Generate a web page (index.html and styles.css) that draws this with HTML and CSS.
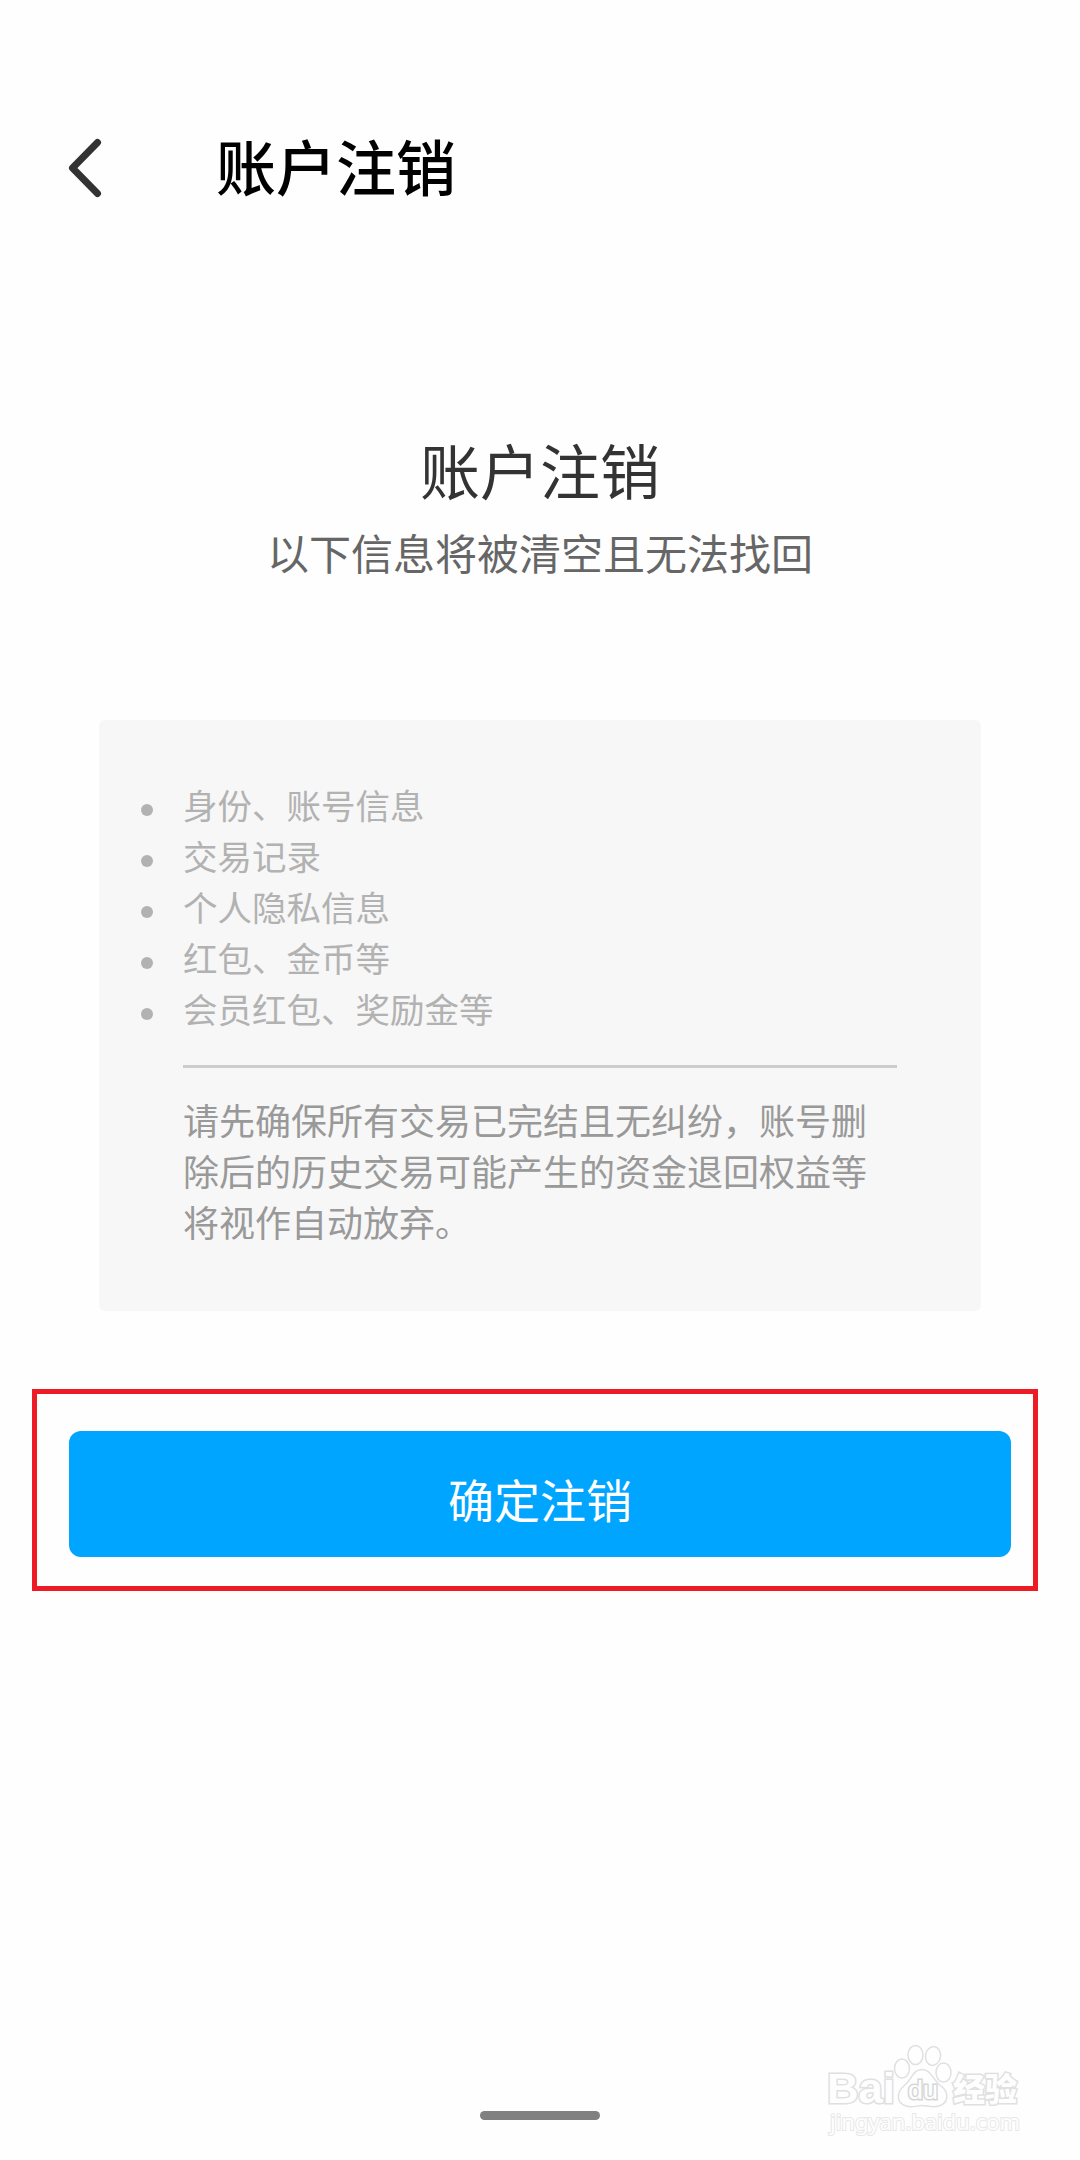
FILE: index.html
```html
<!DOCTYPE html>
<html lang="zh-CN">
<head>
    <meta charset="UTF-8">
    <meta name="viewport" content="width=device-width, initial-scale=1.0">
    <title>账户注销</title>
    <link rel="stylesheet" href="styles.css">
</head>
<body>
    <div class="page">
        <header class="header">
            <svg class="back" viewBox="0 0 34 60" width="34" height="60">
                <path d="M29.5 4.5L4.5 30L29.5 55.5"/>
            </svg>
            <h1>账户注销</h1>
        </header>
        <div class="intro">
            <h2>账户注销</h2>
            <p>以下信息将被清空且无法找回</p>
        </div>
        <div class="card">
            <ul class="items">
                <li>身份、账号信息</li>
                <li>交易记录</li>
                <li>个人隐私信息</li>
                <li>红包、金币等</li>
                <li>会员红包、奖励金等</li>
            </ul>
            <p class="notice">请先确保所有交易已完结且无纠纷，账号删除后的历史交易可能产生的资金退回权益等将视作自动放弃。</p>
        </div>
        <div class="highlight">
            <button type="button" class="btn">确定注销</button>
        </div>
        <div class="home-bar"></div>
        <svg class="watermark" viewBox="0 0 200 100" width="200" height="100">
            <text class="wm-bai" x="6" y="43" textLength="68" lengthAdjust="spacingAndGlyphs">Bai</text>
            <ellipse cx="81" cy="8.500" rx="7.500" ry="9.500"/>
            <ellipse cx="94.500" cy="-5" rx="7.500" ry="9.500"/>
            <ellipse cx="112" cy="-4" rx="7.500" ry="9.500" transform="rotate(10 112 -4)"/>
            <ellipse cx="122.500" cy="12.500" rx="7.500" ry="9.500"/>
            <path d="M101 9.500C92 9.500 91 19 84 25C75 32 75 43 85 46C91 48 96 45.500 101 45.500C106 45.500 112 48 118 46C128 43 128 32 120 26C112 20 110 9.500 101 9.500Z"/>
            <text class="wm-du" x="87" y="39" textLength="30" lengthAdjust="spacingAndGlyphs">du</text>
            <text class="wm-cn" x="132" y="41">经验</text>
            <text class="wm-url" x="9" y="70" textLength="190" lengthAdjust="spacingAndGlyphs">jingyan.baidu.com</text>
        </svg>
    </div>
</body>
</html>
```
FILE: styles.css
```css
* {
    box-sizing: border-box;
    margin: 0;
    padding: 0;
}
body {
    font-family: "Noto Sans CJK SC", sans-serif;
    background-color: #fefefe;
}
.page {
    position: relative;
    display: flex;
    flex-direction: column;
    width: 1080px;
    height: 2160px;
    overflow: hidden;
}
.header {
    display: flex;
    align-items: center;
    height: 120px;
    margin-top: 108px;
    padding-left: 68px;
}
.back {
    fill: none;
    stroke: #333;
    stroke-width: 7;
    stroke-linecap: round;
    stroke-linejoin: round;
}
h1 {
    margin: 0 0 7px 114px;
    color: #000;
    font-size: 60px;
    font-weight: 500;
    line-height: 84px;
}
.intro {
    margin-top: 199px;
    text-align: center;
}
.intro h2 {
    color: #333;
    font-size: 60px;
    font-weight: 400;
    line-height: 84px;
}
.intro p {
    color: #666;
    font-size: 42px;
    line-height: 60px;
    margin-top: 11px;
}
.card {
    width: 882px;
    height: 591px;
    margin: 138px auto 0;
    padding: 59px 84px;
    background-color: #f7f7f7;
    border-radius: 6px;
}
.items {
    list-style: none;
    padding-bottom: 31px;
    border-bottom: 3px solid #ccc;
    color: #b2b2b2;
    font-size: 34.5px;
    line-height: 51px;
}
.items li {
    display: flex;
    align-items: center;
}
.items li::before {
    content: "";
    width: 12px;
    height: 12px;
    margin: 10px 30px 0 -42px;
    border-radius: 50%;
    background-color: #b2b2b2;
}
.notice {
    width: 686px;
    margin-top: 26px;
    color: #999;
    font-size: 36px;
    line-height: 51px;
}
.highlight {
    width: 1006px;
    height: 202px;
    margin: 78px 0 0 32px;
    padding: 37px 22px 0 32px;
    border: 5px solid #ed1c24;
}
.btn {
    display: block;
    width: 942px;
    height: 126px;
    padding-top: 7px;
    border: none;
    border-radius: 12px;
    background-color: #00a5ff;
    color: #fff;
    font-family: inherit;
    font-size: 46px;
    cursor: pointer;
}
.home-bar {
    width: 120px;
    height: 9px;
    margin: auto auto 40px;
    border-radius: 5px;
    background-color: #808080;
}
/* logo laid over the bottom right corner */
.watermark {
    position: absolute;
    left: 821px;
    top: 2060px;
    overflow: visible;
    fill: #fefefe;
    stroke: #e0e0e0;
    stroke-width: 1.5;
}
.watermark text {
    paint-order: stroke;
    stroke-width: 3;
    font-family: "Liberation Sans", "Noto Sans CJK SC", sans-serif;
    font-weight: 700;
}
.watermark .wm-bai {
    font-size: 42px;
}
.watermark .wm-du {
    font-size: 26px;
    font-weight: 400;
    stroke: #d6d6d6;
}
.watermark .wm-cn {
    font-family: "Noto Sans CJK SC", sans-serif;
    font-size: 32px;
    font-weight: 900;
}
.watermark .wm-url {
    font-family: "Noto Sans", sans-serif;
    font-size: 22px;
    font-weight: 400;
    stroke: #e8e8e8;
    stroke-width: 2;
}
```
